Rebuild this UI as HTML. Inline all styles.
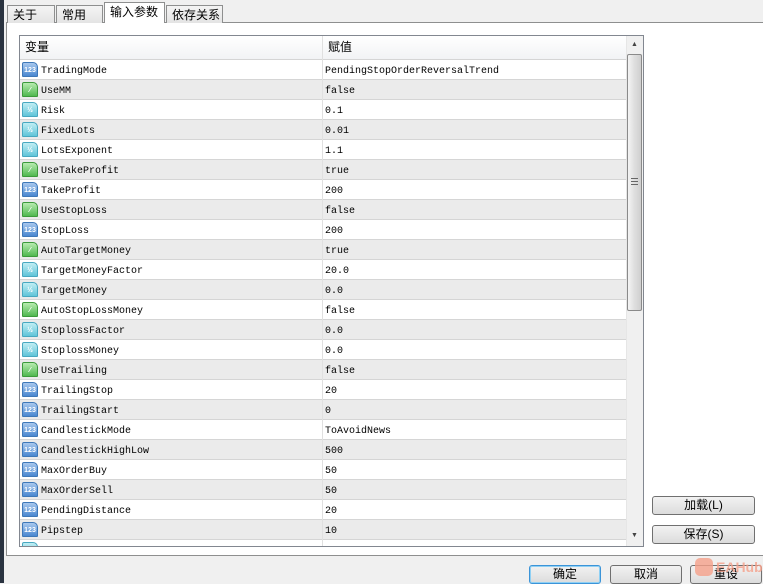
<!DOCTYPE html>
<html><head><meta charset="utf-8"><style>
*{margin:0;padding:0;box-sizing:border-box}
body{width:763px;height:583px;background:#f0f0f0;position:relative;overflow:hidden;font-family:"Liberation Sans","Noto Sans CJK SC",sans-serif;font-size:12px;color:#000}
.abs{position:absolute}
.tab{position:absolute;top:5px;height:18px;border:1px solid #8e8f8f;border-bottom:none;background:linear-gradient(#f4f4f4,#e4e4e4);font-size:12px;line-height:18px;padding-left:5px}
.panel{left:6px;top:22px;width:757px;height:534px;background:#fff;border:1px solid #8e8f8f;border-right:none}
.list{left:19px;top:35px;width:625px;height:512px;border:1px solid #828790;background:#fff;overflow:hidden}
.row{position:absolute;left:0;width:606px;height:20px;border-bottom:1px solid #d5d5d5;font-family:"Liberation Mono",monospace;font-size:10px;line-height:19px}
.row.g{background:#ebebeb}
.row .n{position:absolute;left:21px;top:2px}
.row .v{position:absolute;left:305px;top:2px}
.row .ic{position:absolute;left:2px;top:2px;width:16px;height:15px;border-radius:2px 5px 1px 1px;font-family:"Liberation Sans",sans-serif;font-size:7px;font-weight:bold;line-height:15px;text-align:center;color:#fff}
.i1{background:linear-gradient(#a8c8ee,#4a88d0);border:1px solid #3e78b8}
.i2{background:linear-gradient(#b8ecb0,#50b850);border:1px solid #3c9a3c}
.i3{background:linear-gradient(#c0eef4,#60c4d8);border:1px solid #48a8c0}
.btn{position:absolute;height:19px;border:1px solid #707070;border-radius:3px;background:linear-gradient(#f2f2f2,#dcdcdc);text-align:center;font-size:12px;line-height:17px}
</style></head><body>
<div class="abs" style="left:0;top:0;width:4px;height:583px;background:#2a3340"></div>
<div class="abs panel"></div>
<div class="tab" style="left:7px;width:48px">关于</div>
<div class="tab" style="left:56px;width:47px">常用</div>
<div class="tab" style="left:104px;top:2px;height:21px;width:61px;background:#fff;border-color:#8e8f8f;z-index:2">输入参数</div>
<div class="tab" style="left:166px;width:57px">依存关系</div>
<div class="abs list">
<div class="abs" style="left:0;top:0;width:606px;height:24px;background:linear-gradient(#fff,#f2f3f5);border-bottom:1px solid #d5d5d5;font-size:12px;line-height:23px"><span class="abs" style="left:5px">变量</span><span class="abs" style="left:302px;top:0;height:24px;border-left:1px solid #e0e0e0"></span><span class="abs" style="left:308px">赋值</span></div>
<div class="abs" style="left:302px;top:24px;width:1px;height:490px;background:#e0e0e0;z-index:1"></div>
<div id="rows"></div>
<div class="abs" style="left:606px;top:0;width:17px;height:510px;background:#f0f0f0;border-left:1px solid #e6e6e6"></div>
<div class="abs" style="left:611px;top:5px;font-size:7px;color:#444">▲</div>
<div class="abs" style="left:611px;top:496px;font-size:7px;color:#444">▼</div>
<div class="abs" style="left:607px;top:18px;width:15px;height:257px;border:1px solid #8a8a8a;border-radius:2px;background:linear-gradient(90deg,#f4f4f4,#dedede,#cfcfcf)"></div>
<div class="abs" style="left:611px;top:142px;width:7px;height:7px;border-top:1px solid #666;border-bottom:1px solid #666"><div style="margin-top:2px;border-top:1px solid #666"></div></div>
</div>
<div class="btn" style="left:652px;top:496px;width:103px">加载(L)</div>
<div class="btn" style="left:652px;top:525px;width:103px">保存(S)</div>
<div class="btn" style="left:529px;top:565px;width:72px;border-color:#3c94d8;box-shadow:inset 0 0 0 1px #8fd0f4">确定</div>
<div class="btn" style="left:610px;top:565px;width:72px">取消</div>
<div class="btn" style="left:690px;top:565px;width:72px">重设</div>
<div class="abs" style="left:695px;top:558px;width:18px;height:18px;border-radius:5px;background:#f5a08a;opacity:.8"></div>
<div class="abs" style="left:716px;top:559px;font-size:14px;font-weight:bold;color:#f5a08a;opacity:.8">EAHub</div>
<script>
var d=[["1","TradingMode","PendingStopOrderReversalTrend"],["2","UseMM","false"],["3","Risk","0.1"],["3","FixedLots","0.01"],["3","LotsExponent","1.1"],["2","UseTakeProfit","true"],["1","TakeProfit","200"],["2","UseStopLoss","false"],["1","StopLoss","200"],["2","AutoTargetMoney","true"],["3","TargetMoneyFactor","20.0"],["3","TargetMoney","0.0"],["2","AutoStopLossMoney","false"],["3","StoplossFactor","0.0"],["3","StoplossMoney","0.0"],["2","UseTrailing","false"],["1","TrailingStop","20"],["1","TrailingStart","0"],["1","CandlestickMode","ToAvoidNews"],["1","CandlestickHighLow","500"],["1","MaxOrderBuy","50"],["1","MaxOrderSell","50"],["1","PendingDistance","20"],["1","Pipstep","10"],["3","",""]];
var t={"1":"123","2":"⁄","3":"½"},h="";
d.forEach(function(r,i){h+='<div class="row'+(i%2?' g':'')+'" style="top:'+(24+i*20)+'px"><span class="ic i'+r[0]+'">'+t[r[0]]+'</span><span class="n">'+r[1]+'</span><span class="v">'+r[2]+'</span></div>';});
document.getElementById("rows").innerHTML=h;
</script>
</body></html>
